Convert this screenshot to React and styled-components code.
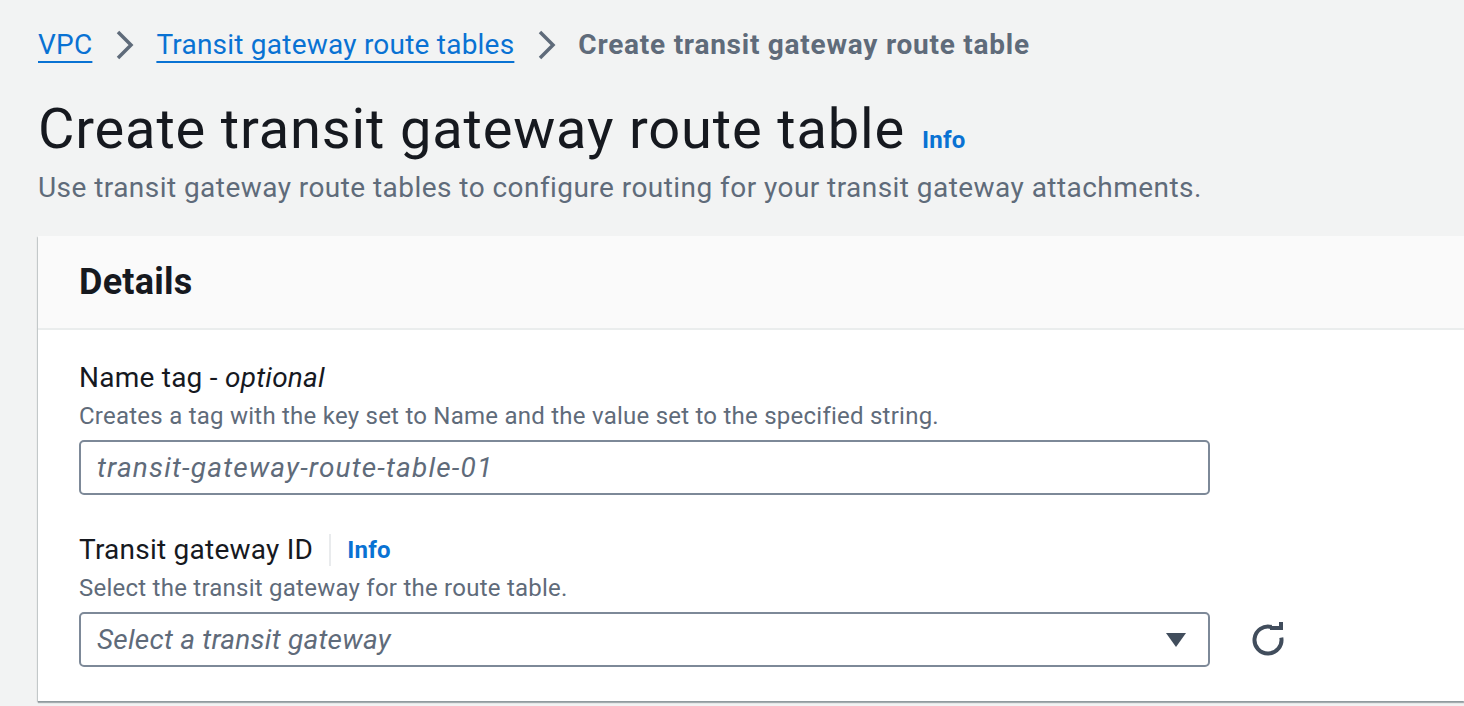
import React from "react";
import styled, { createGlobalStyle } from "styled-components";

const GlobalStyle = createGlobalStyle`
  html, body {
    margin: 0;
    padding: 0;
    background: #f2f3f3;
    overflow: hidden;
  }
  body {
    font-family: Roboto, "Liberation Sans", Arial, sans-serif;
    letter-spacing: 0.015em;
    color: #16191f;
  }
`;

const Page = styled.div`
  padding: 25px 0 0 38px;
  min-height: 706px;
  box-sizing: border-box;
`;

const Breadcrumbs = styled.nav`
  display: flex;
  align-items: center;
  height: 40px;
  font-size: 28px;
  line-height: 40px;
`;

const Crumb = styled.a`
  color: #0972d3;
  letter-spacing: 0.008em;
  text-decoration: underline;
  text-decoration-thickness: 2px;
  text-underline-offset: 7px;
  cursor: pointer;
`;

const Current = styled.span`
  color: #5f6b7a;
  font-weight: 700;
  letter-spacing: 0.027em;
`;

const Chevron = styled.svg`
  width: 20px;
  height: 32px;
  margin: 0 21px 0 23px;
  flex-shrink: 0;
`;

const TitleRow = styled.div`
  display: flex;
  align-items: baseline;
  margin-top: 32px;
`;

const Title = styled.h1`
  margin: 0;
  font-size: 56px;
  line-height: 64px;
  font-weight: 400;
  letter-spacing: 0.015em;
  color: #16191f;
`;

const InfoLink = styled.a`
  color: #0972d3;
  font-weight: 700;
  font-size: 24px;
  margin-left: ${(p) => p.$gap ?? 17}px;
  cursor: pointer;
`;

const Description = styled.p`
  margin: 7px 0 0;
  font-size: 28px;
  line-height: 40px;
  letter-spacing: 0.016em;
  color: #5f6b7a;
`;

const Card = styled.section`
  margin-top: 28px;
  background: #ffffff;
  box-shadow: 0 2px 1px 0 rgba(0, 28, 36, 0.3),
    -1px 1px 1px 0 rgba(0, 28, 36, 0.15);
`;

const CardHeader = styled.header`
  display: flex;
  align-items: center;
  height: 92px;
  padding: 0 41px;
  background: #fafafa;
  border-bottom: 2px solid #eaeded;
`;

const CardTitle = styled.h2`
  margin: 0;
  font-size: 36px;
  line-height: 44px;
  font-weight: 700;
`;

const CardBody = styled.div`
  display: flex;
  flex-direction: column;
  gap: 35px;
  padding: 28px 41px 34px;
`;

const Field = styled.div`
  display: flex;
  flex-direction: column;
`;

const LabelRow = styled.div`
  display: flex;
  align-items: center;
  height: 40px;
`;

const Label = styled.label`
  font-size: 28px;
  line-height: 40px;
  color: #16191f;
`;

const Divider = styled.span`
  width: 2px;
  height: 32px;
  background: #e9ebed;
  margin: 0 16px;
`;

const Hint = styled.div`
  margin-top: 2px;
  font-size: 24px;
  line-height: 32px;
  color: #5f6b7a;
`;

const ControlRow = styled.div`
  display: flex;
  align-items: center;
  margin-top: 8px;
`;

const Input = styled.input`
  box-sizing: border-box;
  width: 1131px;
  height: 55px;
  padding: 0 16px;
  border: 2px solid #7d8998;
  border-radius: 5px;
  font-family: inherit;
  letter-spacing: 0.042em;
  font-size: 28px;
  color: #16191f;
  background: #fff;
  outline: none;
  &::placeholder {
    color: #5f6b7a;
    font-style: italic;
  }
`;

const Select = styled.div`
  box-sizing: border-box;
  width: 1131px;
  height: 55px;
  padding: 0 22px 0 16px;
  border: 2px solid #7d8998;
  border-radius: 5px;
  display: flex;
  align-items: center;
  justify-content: space-between;
  font-size: 28px;
  color: #5f6b7a;
  font-style: italic;
  background: #fff;
`;

const IconButton = styled.button`
  margin-left: 40px;
  padding: 0;
  border: none;
  background: none;
  display: flex;
  cursor: pointer;
`;

export default function App() {
  return (
    <>
      <GlobalStyle />
      <Page>
        <Breadcrumbs>
          <Crumb>VPC</Crumb>
          <Chevron viewBox="0 0 20 32">
            <path d="M3 3l13 13L3 29" fill="none" stroke="#5f6b7a" strokeWidth="3.5" />
          </Chevron>
          <Crumb>Transit gateway route tables</Crumb>
          <Chevron viewBox="0 0 20 32">
            <path d="M3 3l13 13L3 29" fill="none" stroke="#5f6b7a" strokeWidth="3.5" />
          </Chevron>
          <Current>Create transit gateway route table</Current>
        </Breadcrumbs>

        <TitleRow>
          <Title>Create transit gateway route table</Title>
          <InfoLink>Info</InfoLink>
        </TitleRow>
        <Description>
          Use transit gateway route tables to configure routing for your transit gateway attachments.
        </Description>

        <Card>
          <CardHeader>
            <CardTitle>Details</CardTitle>
          </CardHeader>
          <CardBody>
            <Field>
              <LabelRow>
                <Label>
                  Name tag - <i>optional</i>
                </Label>
              </LabelRow>
              <Hint>Creates a tag with the key set to Name and the value set to the specified string.</Hint>
              <ControlRow>
                <Input placeholder="transit-gateway-route-table-01" />
              </ControlRow>
            </Field>

            <Field>
              <LabelRow>
                <Label>Transit gateway ID</Label>
                <Divider />
                <InfoLink $gap={0}>Info</InfoLink>
              </LabelRow>
              <Hint>Select the transit gateway for the route table.</Hint>
              <ControlRow>
                <Select>
                  <span>Select a transit gateway</span>
                  <svg width="20" height="14" viewBox="0 0 20 14">
                    <path d="M0 0h20L10 14z" fill="#414d5c" />
                  </svg>
                </Select>
                <IconButton aria-label="Refresh">
                  <svg width="36" height="36" viewBox="0 0 36 36">
                    <path
                      d="M31.3 15.7A13.5 13.5 0 1 1 21.5 4.96"
                      fill="none"
                      stroke="#414d5c"
                      strokeWidth="4"
                    />
                    <path d="M20 6H31V0" fill="none" stroke="#414d5c" strokeWidth="4" />
                  </svg>
                </IconButton>
              </ControlRow>
            </Field>
          </CardBody>
        </Card>
      </Page>
    </>
  );
}
